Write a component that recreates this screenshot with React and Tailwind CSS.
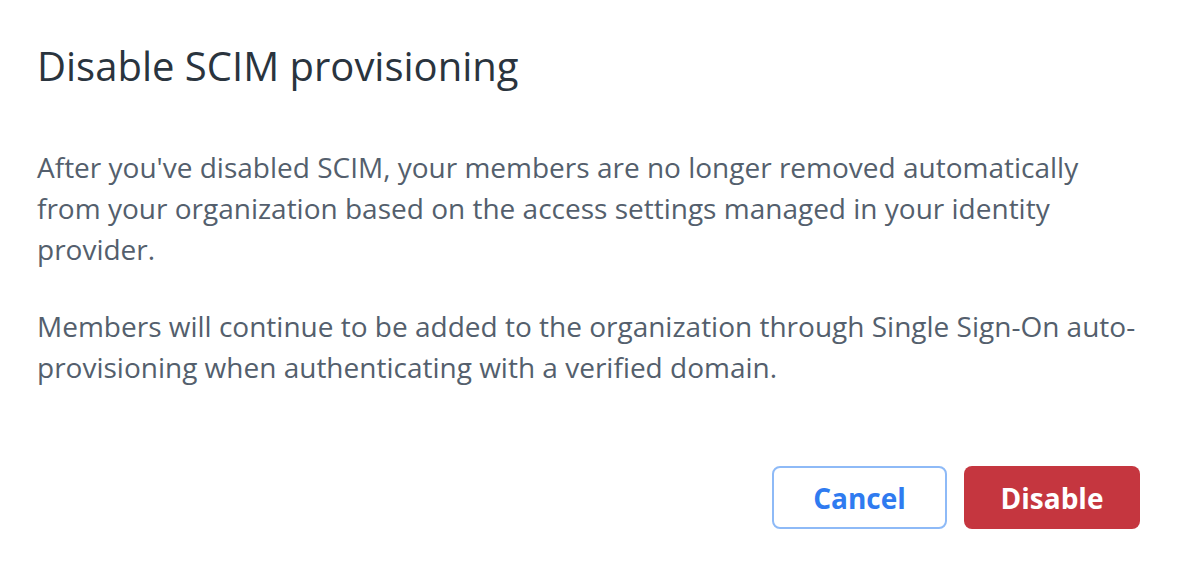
export default function App() {
  return (
    <div className="w-[1178px] h-[568px] bg-white font-['Open_Sans',sans-serif] px-[37px] pt-[42px]">
      <div className="w-[1104px]">
        <h1 className="text-[40px] leading-[48px] text-[#2a343e] font-normal">
          Disable SCIM provisioning
        </h1>
        <div className="mt-[57px] text-[28px] leading-[41px] text-[#545f6d]">
          <p>
            After you've disabled SCIM, your members are no longer removed automatically from your organization based on
            the access settings managed in your identity provider.
          </p>
          <p className="mt-[36px]">
            Members will continue to be added to the organization through Single Sign-On auto-provisioning when
            authenticating with a verified domain.
          </p>
        </div>
        <div className="mt-[78px] flex justify-end gap-[17px] pr-[1px]">
          <button className="w-[175px] h-[63px] rounded-[8px] border-2 border-[#8ebaf7] bg-white text-[#2f7bf0] text-[28px] font-bold">
            Cancel
          </button>
          <button className="w-[176px] h-[63px] rounded-[8px] bg-[#c5363f] text-white text-[28px] font-bold">
            Disable
          </button>
        </div>
      </div>
    </div>
  );
}
